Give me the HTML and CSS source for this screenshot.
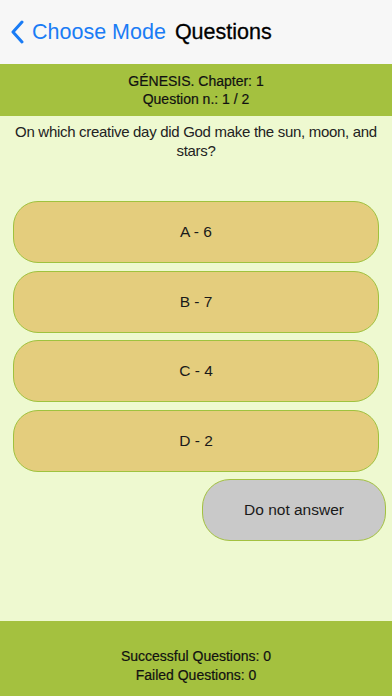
FILE: index.html
```html
<!DOCTYPE html>
<html>
<head>
<meta charset="utf-8">
<link rel="stylesheet" href="styles.css">
</head>
<body>
<div class="screen">
  <header class="nav">
    <div class="back">
      <svg class="chev" width="14" height="24" viewBox="0 0 14 24"><path d="M12 2 L3 12 L12 22" fill="none" stroke="#1a7cf5" stroke-width="3" stroke-linecap="round" stroke-linejoin="round"/></svg>
      <span class="back-label">Choose Mode</span>
    </div>
    <span class="title">Questions</span>
  </header>
  <div class="info">
    <div>GÉNESIS. Chapter: 1</div>
    <div>Question n.: 1 / 2</div>
  </div>
  <main class="content">
    <p class="question">On which creative day did God make the sun, moon, and stars?</p>
    <div class="answers">
      <div class="answer">A - 6</div>
      <div class="answer">B - 7</div>
      <div class="answer">C - 4</div>
      <div class="answer">D - 2</div>
    </div>
    <div class="skip-row"><div class="skip">Do not answer</div></div>
  </main>
  <footer class="footer">
    <div>Successful Questions: 0</div>
    <div>Failed Questions: 0</div>
  </footer>
</div>
</body>
</html>
```

FILE: styles.css
```css
* { box-sizing: border-box; }
html, body { margin: 0; padding: 0; }
body { font-family: "Liberation Sans", Arial, sans-serif; background: #eef9d0; }
.screen { width: 392px; height: 696px; display: flex; flex-direction: column; }
.nav { height: 64px; background: #f7f7f7; display: flex; align-items: center; padding: 0 0 0 10px; }
.back { display: flex; align-items: center; gap: 8px; }
.chev { display: block; }
.back-label { color: #1a7cf5; font-size: 21.5px; }
.title { margin-left: 9px; font-size: 21.5px; font-weight: 500; color: #000; -webkit-text-stroke: 0.3px #000; }
.info { height: 52px; background: #a4c13f; display: flex; flex-direction: column; justify-content: center; align-items: center; font-size: 14px; line-height: 18px; color: #111; -webkit-text-stroke: 0.2px #111; }
.content { flex: 1; display: flex; flex-direction: column; padding: 6px 13px 0 13px; }
.question { margin: 0 -8px; text-align: center; font-size: 15px; line-height: 19px; color: #222; letter-spacing: -0.3px; }
.answers { margin-top: 41px; display: flex; flex-direction: column; gap: 7.5px; }
.answer { height: 62px; border-radius: 25px; background: #e4cd7d; border: 1.5px solid #9fc23e; display: flex; align-items: center; justify-content: center; font-size: 15.5px; color: #1a1a1a; }
.skip-row { display: flex; justify-content: flex-end; margin-top: 7px; margin-right: -7px; }
.skip { width: 184px; height: 62px; border-radius: 28px; background: #c9c9c9; border: 1.5px solid #a3c140; display: flex; align-items: center; justify-content: center; font-size: 15.5px; color: #1a1a1a; }
.footer { height: 75px; background: #a4c13f; display: flex; flex-direction: column; justify-content: flex-end; align-items: center; padding-bottom: 11px; font-size: 14px; line-height: 19px; color: #111; -webkit-text-stroke: 0.2px #111; }
```
